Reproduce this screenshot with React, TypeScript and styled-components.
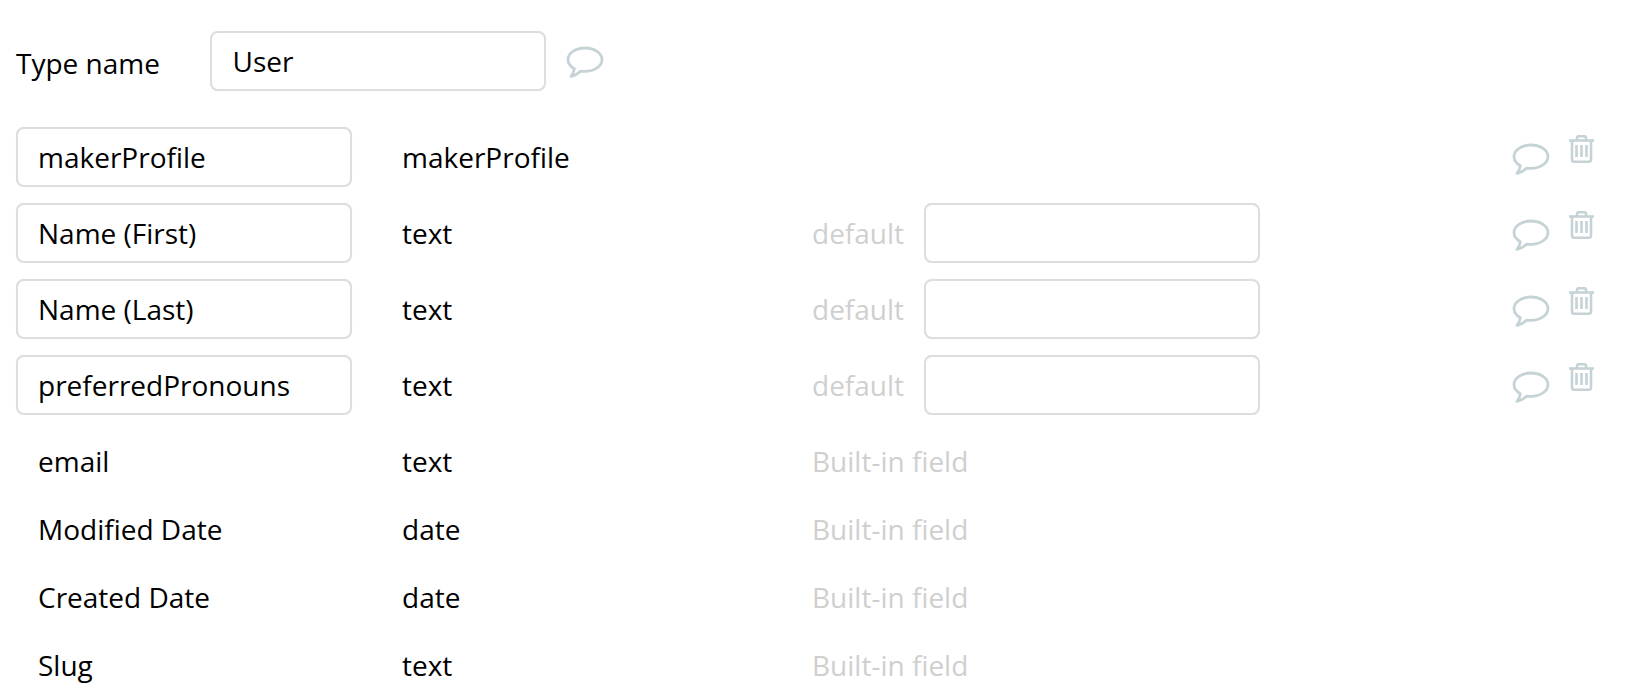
import React from "react"
import styled, { createGlobalStyle } from "styled-components"

const GlobalStyle = createGlobalStyle`
  html, body { margin: 0; padding: 0; background: #fff; height: 700px; overflow: hidden; }
  body { font-family: "Open Sans", "Liberation Sans", sans-serif; color: #000; }
`

const Page = styled.div`
  padding: 31px 0 0 16px;
  width: 1621px;
  font-size: 28px;
`

const Header = styled.div`
  display: flex;
  align-items: center;
  height: 60px;
  margin-bottom: 36px;
`

const HeaderLabel = styled.label`
  width: 194px;
  padding-top: 4px;
`

const Field = styled.input<{ $inset?: number }>`
  box-sizing: border-box;
  width: 336px;
  height: 60px;
  padding: 0 ${(p) => p.$inset || 20}px;
  border: 2px solid #dedede;
  border-radius: 8px;
  box-shadow: 0 0 1px #e6e6e6;
  background: #fff;
  font: inherit;
  color: #000;
  outline: none;
`

const HeaderBubble = styled.div`
  margin-left: 20px;
  display: flex;
  margin-top: 3px;
`

const CustomRows = styled.div`
  display: flex;
  flex-direction: column;
  gap: 16px;
  margin-bottom: 12px;
`

const Row = styled.div<{ $plain?: boolean }>`
  display: grid;
  grid-template-columns: 386px 410px 112px 336px 1fr;
  align-items: center;
  height: ${(p) => (p.$plain ? 68 : 60)}px;
  white-space: nowrap;
`

const PlainName = styled.div`
  padding-left: 22px;
`

const Muted = styled.div`
  color: #cfcfcf;
`

const Actions = styled.div`
  display: flex;
  align-items: flex-start;
  justify-content: flex-end;
  gap: 19px;
  padding-right: 43px;
`

const BubbleIcon = () => (
  <svg width="38" height="33" viewBox="0 0 38 33" fill="none">
    <path
      d="M19 2C9.600 2 2 7 2 13.500c0 3.800 2.500 7 6.300 9.300-.3 2.400-1.400 5-3.300 7.700 4.100-1 7.200-2.800 9.500-5.400 1.400.2 3 .3 4.500.3 9.400 0 17-5.200 17-11.900C36 7 28.400 2 19 2z"
      stroke="#c6d3d6"
      strokeWidth="2.800"
      strokeLinejoin="round"
    />
  </svg>
)

const TrashIcon = () => (
  <svg width="25" height="28" viewBox="0 0 25 28" fill="none" stroke="#c6d3d6" strokeWidth="2.600">
    <path d="M0 5.500h25" />
    <path d="M8 5V2.800C8 1.800 8.800 1.200 9.800 1.200h5.400c1 0 1.800.6 1.800 1.600V5" />
    <path d="M3 6v18.500c0 1.300.9 2.300 2.200 2.300h14.600c1.300 0 2.200-1 2.200-2.300V6" />
    <path d="M7.500 10v12M12.500 10v12M17.500 10v12" />
  </svg>
)

const IconDrop = styled.div`
  display: flex;
  margin-top: 4px;
`

const IconRaise = styled.div`
  display: flex;
  margin-top: -4px;
`

const custom = [
  { name: "makerProfile", type: "makerProfile", hasDefault: false },
  { name: "Name (First)", type: "text", hasDefault: true },
  { name: "Name (Last)", type: "text", hasDefault: true },
  { name: "preferredPronouns", type: "text", hasDefault: true },
]

const builtIn = [
  { name: "email", type: "text" },
  { name: "Modified Date", type: "date" },
  { name: "Created Date", type: "date" },
  { name: "Slug", type: "text" },
]

export default function App() {
  return (
    <>
      <GlobalStyle />
      <Page>
        <Header>
          <HeaderLabel>Type name</HeaderLabel>
          <Field $inset={20.5} defaultValue="User" readOnly />
          <HeaderBubble>
            <BubbleIcon />
          </HeaderBubble>
        </Header>
        <CustomRows>
          {custom.map((item) => (
            <Row key={item.name}>
              <Field defaultValue={item.name} readOnly />
              <div>{item.type}</div>
              {item.hasDefault ? <Muted>default</Muted> : <div />}
              {item.hasDefault ? <Field readOnly /> : <div />}
              <Actions>
                <IconDrop>
                  <BubbleIcon />
                </IconDrop>
                <IconRaise>
                  <TrashIcon />
                </IconRaise>
              </Actions>
            </Row>
          ))}
        </CustomRows>
        {builtIn.map((item) => (
          <Row key={item.name} $plain>
            <PlainName>{item.name}</PlainName>
            <div>{item.type}</div>
            <Muted>Built-in field</Muted>
          </Row>
        ))}
      </Page>
    </>
  )
}
